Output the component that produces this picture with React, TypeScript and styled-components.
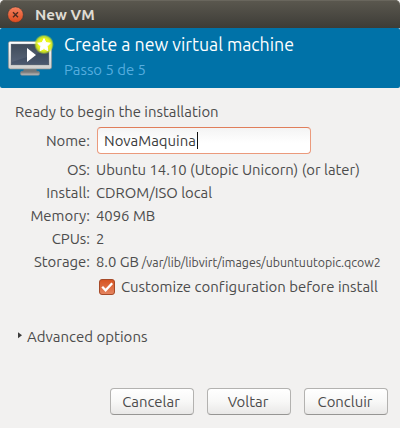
import React from "react";
import styled, { createGlobalStyle } from "styled-components";

const GlobalStyle = createGlobalStyle`
  * { box-sizing: border-box; }
  body { margin: 0; background: #fff; overflow: hidden; }
`;

const Window = styled.main`
  width: 400px;
  height: 428px;
  display: flex;
  flex-direction: column;
  background: #f2f1f0;
  color: #4c4c4c;
  font: 14.9px/23px Ubuntu, "Noto Sans", sans-serif;
  font-variant-ligatures: none;
`;

const TitleBar = styled.header`
  height: 28px;
  flex: none;
  display: flex;
  align-items: center;
  gap: 11px;
  padding-left: 7px;
  border-radius: 5px 5px 0 0;
  background: linear-gradient(#5b584f, #3d3c37);
  box-shadow: inset 0 1px #69665d;
`;

const CloseButton = styled.button`
  width: 17px;
  height: 17px;
  padding: 0;
  border: 0;
  background: none;
  display: flex;
`;

const WindowTitle = styled.h1`
  margin: 2px 0 0;
  font-size: 15.2px;
  line-height: 28px;
  font-weight: 700;
  color: #dfdbd2;
`;

const Banner = styled.section`
  height: 60px;
  flex: none;
  display: flex;
  gap: 9px;
  padding-left: 7px;
  border-radius: 2px;
  background: #0072a8;
`;

const BannerText = styled.div`
  padding-top: 4px;
`;

const Text = styled.span<{ $size?: number }>`
  white-space: pre;
  font-size: ${({ $size = 14.9 }) => $size}px;
`;

const Heading = styled.h2`
  margin: 0;
  font-size: inherit;
  font-weight: 400;
  line-height: 24px;
  color: #fff;
`;

const Step = styled.p`
  margin: 0;
  line-height: 23px;
  color: #55addf;
`;

const Intro = styled.p`
  margin: 12px 0 3px 15px;
  height: 24px;
  line-height: 24px;
`;

const Details = styled.dl`
  margin: 0;
  display: grid;
  grid-template-columns: 90px 1fr;
  grid-template-rows: 31px;
  grid-auto-rows: 23px;
  column-gap: 6px;
`;

const Label = styled.dt<{ $offset?: number }>`
  padding-top: ${({ $offset = 0 }) => $offset}px;
  text-align: right;
`;

const Value = styled.dd`
  margin: 0;
  white-space: nowrap;
`;

const Field = styled.div`
  width: 214px;
  height: 27px;
  margin-left: 1px;
  padding-left: 6px;
  display: flex;
  align-items: center;
  border: 1px solid #eb9a7c;
  border-top-color: #e07e5b;
  border-radius: 4px;
  background: linear-gradient(#f4f4f4, #fff 60%);
  color: #3c3c3c;
`;

const Caret = styled.i`
  width: 1px;
  height: 17px;
  margin-left: 1px;
  background: #111;
`;

const CheckRow = styled.label`
  display: flex;
  align-items: center;
  gap: 6px;
  height: 24px;
  margin: 2px 0 0 99px;
`;

const CheckLabel = styled.span`
  line-height: 22px;
`;

const Expander = styled.div`
  display: flex;
  align-items: center;
  gap: 5px;
  height: 24px;
  margin: 25px 0 0 18px;
`;

const Arrow = styled.svg`
  margin-top: -2px;
`;

const Actions = styled.footer`
  display: flex;
  gap: 13px;
  margin: auto 12px 13px auto;
`;

const ActionButton = styled.button`
  width: 84px;
  height: 27px;
  padding: 0 2px 0 0;
  border: 1px solid #b3b2b0;
  border-bottom-color: #969593;
  border-radius: 4px;
  background: linear-gradient(#fff, #f8f8f7 50%, #e9e8e7);
  color: #4c4c4c;
  font: inherit;
  line-height: 24px;
`;

const CloseIcon = () => (
  <svg width="17" height="17" viewBox="0 0 17 17">
    <defs>
      <linearGradient id="close" x2="0" y2="1">
        <stop stopColor="#f58260" />
        <stop offset="1" stopColor="#dd4a1d" />
      </linearGradient>
    </defs>
    <circle cx="8.5" cy="8.7" r="7.8" fill="url(#close)" stroke="#35332e" strokeWidth=".5" />
    <path d="m6 6.2 5 5m0-5-5 5" stroke="#4c2b20" strokeWidth="1.4" />
  </svg>
);

const MonitorIcon = () => (
  <svg width="48" height="50" viewBox="0 0 48 50">
    <defs>
      <linearGradient id="frame" x2="0" y2="1">
        <stop stopColor="#fff" />
        <stop offset="1" stopColor="#d0d0ce" />
      </linearGradient>
      <linearGradient id="screen" x2="0" y2="1">
        <stop stopColor="#303c4c" />
        <stop offset="1" stopColor="#4c5a70" />
      </linearGradient>
      <linearGradient id="foot" x2="0" y2="1">
        <stop stopColor="#666" />
        <stop offset="1" stopColor="#c4c4c4" />
      </linearGradient>
      <radialGradient id="glow">
        <stop offset=".6" stopColor="#e9f51b" />
        <stop offset=".8" stopColor="#d3e922" stopOpacity=".85" />
        <stop offset="1" stopColor="#b4d930" stopOpacity="0" />
      </radialGradient>
    </defs>
    <path d="M17 40h12l1 4H16z" fill="#707476" />
    <rect x="13.5" y="43.3" width="19" height="3.9" rx="1.5" fill="url(#foot)" stroke="#808486" strokeWidth=".6" />
    <rect x="1.4" y="13.4" width="43.2" height="27.6" rx="2" fill="url(#frame)" stroke="#8b8f90" strokeWidth=".7" />
    <rect x="4.2" y="16.2" width="37.6" height="20.6" fill="url(#screen)" stroke="#45505f" strokeWidth=".6" />
    <path d="M5 17h36v5L5 34z" fill="#fff" opacity=".08" />
    <path d="M20 20v14l9-7z" fill="#fff" />
    <circle cx="37" cy="16.4" r="10" fill="url(#glow)" />
    <path d="m37 10.6 1.9 4 4.4.6-3.2 3.1.8 4.4-3.9-2.1-3.9 2.1.8-4.4-3.2-3.1 4.4-.6z" fill="#fff" stroke="#fff" strokeLinejoin="round" />
  </svg>
);

const CheckIcon = () => (
  <svg width="16" height="16" viewBox="0 0 16 16">
    <defs>
      <linearGradient id="check" x2="0" y2="1">
        <stop stopColor="#d65320" />
        <stop offset="1" stopColor="#e58561" />
      </linearGradient>
    </defs>
    <rect x=".5" y=".5" width="15" height="15" rx="2.5" fill="url(#check)" stroke="#a64a28" />
    <path d="m3.2 7.8 3.4 3.6 6.6-7.2" fill="none" stroke="#fff" strokeWidth="2.3" />
  </svg>
);

const details = [
  { label: "OS:", value: "Ubuntu 14.10 (Utopic Unicorn) (or later)" },
  { label: "Install:", value: "CDROM/ISO local" },
  { label: "Memory:", value: "4096 MB" },
  { label: "CPUs:", value: "2" },
];

export default function App() {
  return (
    <>
      <GlobalStyle />
      <Window>
        <TitleBar>
          <CloseButton aria-label="Close"><CloseIcon /></CloseButton>
          <WindowTitle>New VM</WindowTitle>
        </TitleBar>
        <Banner>
          <MonitorIcon />
          <BannerText>
            <Heading><Text $size={17.75}>Create a new virtual machine</Text></Heading>
            <Step><Text>Passo 5 de 5</Text></Step>
          </BannerText>
        </Banner>
        <Intro><Text>Ready to begin the installation</Text></Intro>
        <Details>
          <Label $offset={2}><Text>Nome:</Text></Label>
          <Value><Field><Text>NovaMaquina</Text><Caret /></Field></Value>
          {details.map(({ label, value }) => (
            <React.Fragment key={label}>
              <Label><Text>{label}</Text></Label>
              <Value><Text $size={14.85}>{value}</Text></Value>
            </React.Fragment>
          ))}
          <Label><Text>Storage:</Text></Label>
          <Value><Text $size={14.8}>8.0 GB</Text><Text $size={12.35}> /var/lib/libvirt/images/ubuntuutopic.qcow2</Text></Value>
        </Details>
        <CheckRow><CheckIcon /><CheckLabel><Text $size={14.95}>Customize configuration before install</Text></CheckLabel></CheckRow>
        <Expander>
          <Arrow width="4" height="7" viewBox="0 0 4 7"><path d="M0 .3v6L4 3.3z" fill="#3c3c3c" /></Arrow>
          <Text $size={15}>Advanced options</Text>
        </Expander>
        <Actions>
          <ActionButton><Text>Cancelar</Text></ActionButton>
          <ActionButton><Text>Voltar</Text></ActionButton>
          <ActionButton><Text>Concluir</Text></ActionButton>
        </Actions>
      </Window>
    </>
  );
}
